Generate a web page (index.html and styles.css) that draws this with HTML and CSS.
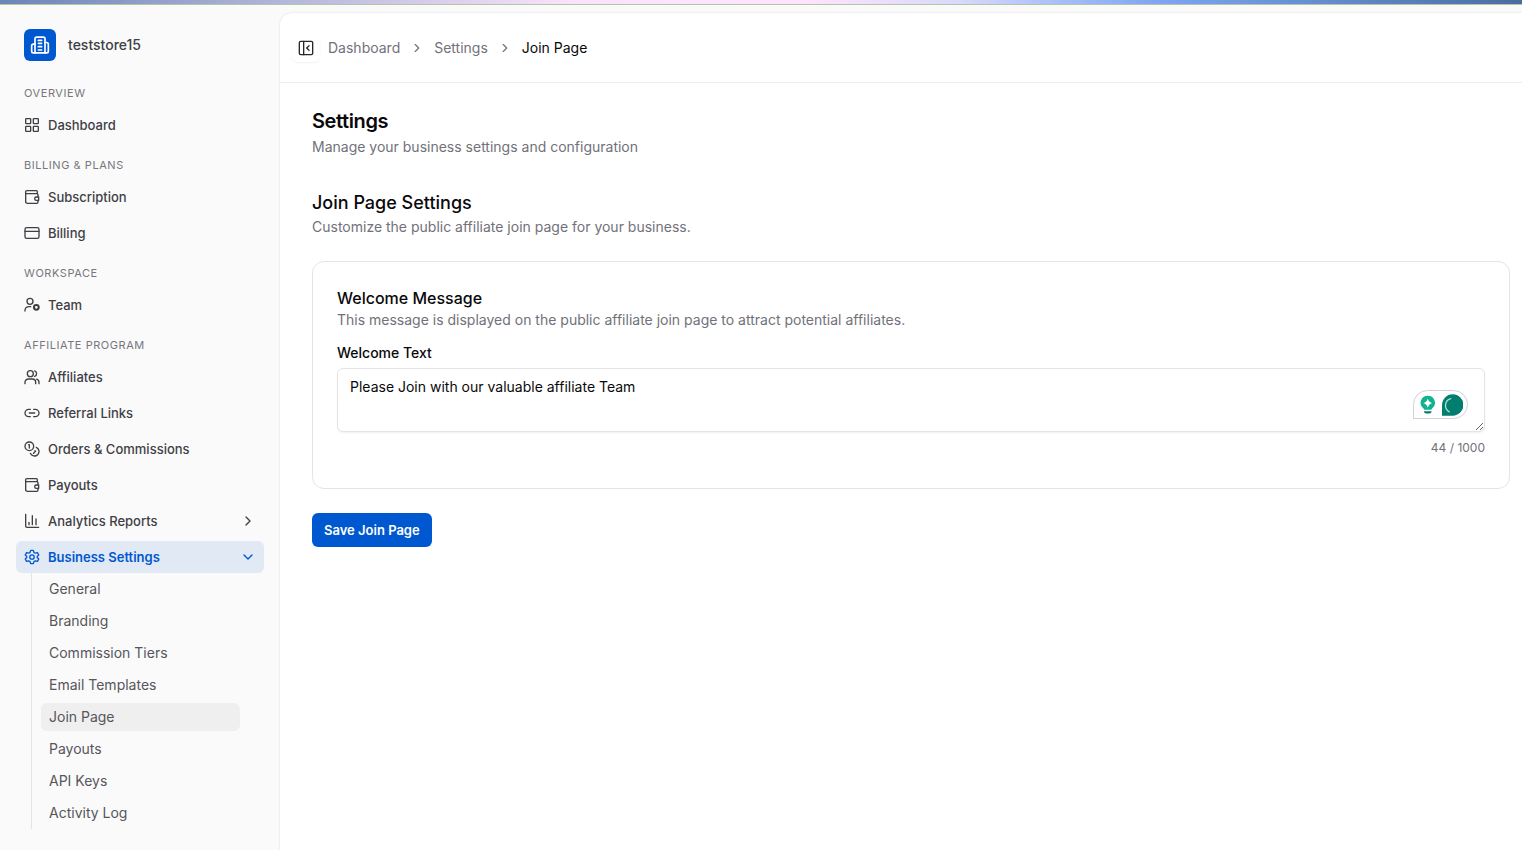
FILE: index.html
```
<!DOCTYPE html>
<html lang="en">
<head>
<meta charset="utf-8">
<meta name="viewport" content="width=device-width, initial-scale=1">
<title>Join Page Settings</title>
<link rel="stylesheet" href="styles.css">
</head>
<body>
<div class="top-strip"></div>
<div class="app">
  <aside class="sidebar">
    <a class="store" href="#">
      <span class="store-logo">
        <svg class="icon icon-lg" viewBox="0 0 24 24"><path d="M6 21.5V4.500a2 2 0 0 1 2-2h8a2 2 0 0 1 2 2v17"/><path d="M6 11H4a2 2 0 0 0-2 2v6.500a2 2 0 0 0 2 2h16a2 2 0 0 0 2-2V11a2 2 0 0 0-2-2h-2"/><path d="M10 6.500h4M10 10h4M10 14h4M10 18h4"/></svg>
      </span>
      <span>teststore15</span>
    </a>
    <nav class="nav">
      <section class="group">
        <h2 class="group-label">OVERVIEW</h2>
        <a class="item" href="#"><svg class="icon" viewBox="0 0 24 24"><rect x="2.500" y="2.500" width="7.500" height="7.500" rx="1"/><rect x="14" y="2.500" width="7.500" height="7.500" rx="1"/><rect x="14" y="14" width="7.500" height="7.500" rx="1"/><rect x="2.500" y="14" width="7.500" height="7.500" rx="1"/></svg><span>Dashboard</span></a>
      </section>
      <section class="group">
        <h2 class="group-label">BILLING &amp; PLANS</h2>
        <a class="item" href="#"><svg class="icon" viewBox="0 0 24 24"><path d="M20 7V4a1.500 1.500 0 0 0-1.500-1.500H4.500a2.250 2.250 0 0 0 0 4.500H19a2 2 0 0 1 2 2v3M2.500 5v14a2.500 2.500 0 0 0 2.500 2.500h14a2 2 0 0 0 2-2V17"/><path d="M22 12h-3.500a2.500 2.500 0 0 0 0 5H22z"/></svg><span>Subscription</span></a>
        <a class="item" href="#"><svg class="icon" viewBox="0 0 24 24"><rect x="1.500" y="4" width="21" height="16" rx="2.500"/><path d="M1.500 9.500h21"/></svg><span>Billing</span></a>
      </section>
      <section class="group">
        <h2 class="group-label">WORKSPACE</h2>
        <a class="item" href="#"><svg class="icon" viewBox="0 0 24 24"><circle cx="9" cy="6.500" r="4.500"/><path d="M1.500 21v-1.500A6 6 0 0 1 7.500 14.500H10"/><circle class="thick" cx="18.500" cy="15.500" r="3.600"/></svg><span>Team</span></a>
      </section>
      <section class="group">
        <h2 class="group-label">AFFILIATE PROGRAM</h2>
        <a class="item" href="#"><svg class="icon" viewBox="0 0 24 24"><circle cx="9.500" cy="7" r="4.500"/><path d="M1.500 22v-2a5 5 0 0 1 5-5h6a5 5 0 0 1 5 5v2M16 2.800a4.500 4.500 0 0 1 0 8.400M19 15.200a5 5 0 0 1 3.500 4.800v2"/></svg><span>Affiliates</span></a>
        <a class="item" href="#"><svg class="icon" viewBox="0 0 24 24"><path d="M9.500 17.500H7a5.500 5.500 0 0 1 0-11h2.500M14.500 6.500H17a5.500 5.500 0 0 1 0 11h-2.500M8 12h8"/></svg><span>Referral Links</span></a>
        <a class="item" href="#"><svg class="icon" viewBox="0 0 24 24"><circle cx="8" cy="8" r="6.500"/><path d="M7 5.500h1v5M18.500 9.500a6.800 6.800 0 1 1-9 9M16.500 14.500l.8.800-3 3"/></svg><span>Orders &amp; Commissions</span></a>
        <a class="item" href="#"><svg class="icon" viewBox="0 0 24 24"><path d="M20 7V4a1.500 1.500 0 0 0-1.500-1.500H4.500a2.250 2.250 0 0 0 0 4.500H19a2 2 0 0 1 2 2v3M2.500 5v14a2.500 2.500 0 0 0 2.500 2.500h14a2 2 0 0 0 2-2V17"/><path d="M22 12h-3.500a2.500 2.500 0 0 0 0 5H22z"/></svg><span>Payouts</span></a>
        <a class="item" href="#"><svg class="icon" viewBox="0 0 24 24"><path d="M2.500 2v17.500a2 2 0 0 0 2 2H22M7.500 17.500V14M12.500 17.500V4M18 17.500V9"/></svg><span>Analytics Reports</span><svg class="icon chevron" viewBox="0 0 24 24"><path d="m9 18 6-6-6-6"/></svg></a>
        <div>
          <a class="item item-active" href="#"><svg class="icon" viewBox="0 0 24 24"><path d="M10 2h4l1 3.200 1.800 1 3.300-.8 2 3.500-2.300 2.400v1.400l2.300 2.400-2 3.500-3.300-.8-1.800 1L14 22h-4l-1-3.200-1.800-1-3.300.8-2-3.500 2.300-2.400v-1.400L1.900 8.900l2-3.500 3.300.8 1.800-1z"/><circle cx="12" cy="12" r="3.300"/></svg><span>Business Settings</span><svg class="icon chevron" viewBox="0 0 24 24"><path d="m6 9 6 6 6-6"/></svg></a>
          <div class="subnav">
            <a class="subitem" href="#">General</a>
            <a class="subitem" href="#">Branding</a>
            <a class="subitem" href="#">Commission Tiers</a>
            <a class="subitem" href="#">Email Templates</a>
            <a class="subitem subitem-active" href="#" aria-current="page">Join Page</a>
            <a class="subitem" href="#">Payouts</a>
            <a class="subitem" href="#">API Keys</a>
            <a class="subitem" href="#">Activity Log</a>
          </div>
        </div>
      </section>
    </nav>
  </aside>
  <main class="panel">
    <header class="bar">
      <button class="toggle" type="button" aria-label="Collapse sidebar"><svg class="icon" viewBox="0 0 24 24"><rect x="2" y="2" width="20" height="20" rx="2"/><path d="M8.500 2v20M16.500 8.500 13 12l3.500 3.500"/></svg></button>
      <nav class="crumbs" aria-label="Breadcrumb">
        <a href="#">Dashboard</a>
        <svg class="icon icon-sm" viewBox="0 0 24 24"><path d="m9 18 6-6-6-6"/></svg>
        <a href="#">Settings</a>
        <svg class="icon icon-sm" viewBox="0 0 24 24"><path d="m9 18 6-6-6-6"/></svg>
        <span class="crumb-current">Join Page</span>
      </nav>
    </header>
    <div class="content">
      <div class="heading">
        <h1>Settings</h1>
        <p>Manage your business settings and configuration</p>
      </div>
      <div class="subheading">
        <h2>Join Page Settings</h2>
        <p>Customize the public affiliate join page for your business.</p>
      </div>
      <form class="form">
        <section class="card">
          <h3>Welcome Message</h3>
          <p>This message is displayed on the public affiliate join page to attract potential affiliates.</p>
          <label for="welcome">Welcome Text</label>
          <div class="field">
            <textarea id="welcome" maxlength="1000" spellcheck="false">Please Join with our valuable affiliate Team</textarea>
            <div class="assistant">
              <svg class="assistant-bulb" viewBox="0 0 16 20"><path fill="#0eb390" d="M8 .5a7.300 7.300 0 0 0-4.200 13.300l.5 1.200h7.400l.5-1.200A7.300 7.300 0 0 0 8 .5z"/><path fill="#fff" d="M8 3.300Q9 7 12.500 8 9 9 8 12.700 7 9 3.500 8 7 7 8 3.300z"/><path fill="#087a68" d="M4 16.300h8a2.500 2.500 0 0 1-2.500 2.400h-3A2.500 2.500 0 0 1 4 16.300z"/></svg>
              <svg class="assistant-mark" viewBox="0 0 22 22"><path fill="#027e6f" d="M0 22V11a11 11 0 1 1 11 11z"/><path fill="none" stroke="#b5dcd6" stroke-width="1.300" stroke-linecap="round" d="M9 4.500A7.300 7.300 0 0 0 7.500 18"/></svg>
            </div>
          </div>
          <div class="counter">44 / 1000</div>
        </section>
        <button class="save" type="button">Save Join Page</button>
      </form>
    </div>
  </main>
</div>
</body>
</html>
```
FILE: styles.css
```
* {
  box-sizing: border-box;
}

body {
  display: flex;
  flex-direction: column;
  min-height: 100vh;
  margin: 0;
  background: #fafafa;
  color: #09090b;
  font: 14px/20px Inter, "Liberation Sans", sans-serif;
}

h1, h2, h3, p {
  margin: 0;
}

a {
  color: inherit;
  text-decoration: none;
}

.top-strip {
  height: 5px;
  border-bottom: 1px solid #b4c7a4;
  background: linear-gradient(90deg, #6b85b7 0%, #b1b4da 18%, #fbe4fa 38%, #fde4fb 53%, #d9d9fb 63%, #a5bcfa 70%, #7fa5f3 76%, #6b93d9 84%, #4a6da0 100%);
}

.app {
  display: flex;
  flex: 1;
}

.icon {
  flex: none;
  width: 16px;
  height: 16px;
  fill: none;
  stroke: currentColor;
  stroke-width: 2;
  stroke-linecap: round;
  stroke-linejoin: round;
}

.icon .thick {
  stroke-width: 3;
}

.icon-lg {
  width: 20px;
  height: 20px;
}

.icon-sm {
  width: 14px;
  height: 14px;
}

.sidebar {
  flex: none;
  width: 280px;
  padding: 16px;
  color: #3f3f46;
}

.store {
  display: flex;
  align-items: center;
  gap: 12px;
  height: 48px;
  padding: 8px;
  font-weight: 500;
}

.store-logo {
  display: grid;
  place-items: center;
  width: 32px;
  height: 32px;
  border-radius: 6px;
  background: #0058d0;
  color: #fff;
}

.nav {
  display: flex;
  flex-direction: column;
  gap: 8px;
  padding-top: 8px;
}

.group {
  display: flex;
  flex-direction: column;
  gap: 4px;
}

.group-label {
  height: 28px;
  padding: 0 8px;
  color: #77777d;
  font-size: 11px;
  font-weight: 400;
  line-height: 32px;
  letter-spacing: 0.05em;
}

.item {
  display: flex;
  align-items: center;
  gap: 8px;
  height: 32px;
  padding: 0 8px;
  border-radius: 6px;
  font-size: 13px;
  font-weight: 500;
}

.item-active {
  background: #e1e9f5;
  color: #0058d0;
  font-weight: 600;
}

.chevron {
  margin-left: auto;
}

.subnav {
  display: flex;
  flex-direction: column;
  gap: 4px;
  margin: 0 24px 0 15px;
  padding: 2px 0 2px 9px;
  border-left: 1px solid #e4e4e7;
}

.subitem {
  padding: 4px 8px;
  border-radius: 6px;
  color: #56565c;
}

.subitem-active {
  background: #efefef;
}

.panel {
  flex: 1;
  min-width: 0;
  margin-top: 8px;
  border-radius: 12px 0 0 0;
  background: #fff;
  box-shadow: 0 0 2px rgba(0, 0, 0, 0.15);
}

.bar {
  display: flex;
  align-items: center;
  gap: 8px;
  height: 70px;
  padding: 0 12px;
  border-bottom: 1px solid #ececee;
}

.toggle {
  display: grid;
  place-items: center;
  width: 28px;
  height: 28px;
  padding: 0;
  border: 0;
  border-radius: 6px;
  background: #fff;
  color: #27272a;
  box-shadow: 0 1px 2px rgba(0, 0, 0, 0.06);
}

.crumbs {
  display: flex;
  align-items: center;
  gap: 10px;
  color: #71717a;
}

.crumb-current {
  color: #09090b;
}

.content {
  padding: 24px 12px 24px 32px;
}

.content p {
  color: #71717a;
}

.heading h1 {
  font-size: 20px;
  font-weight: 600;
  line-height: 28px;
  letter-spacing: -0.02em;
}

.heading p {
  padding-top: 2px;
}

.subheading {
  padding-top: 32px;
}

.subheading h2 {
  font-size: 18px;
  font-weight: 500;
  line-height: 28px;
}

.form {
  display: flex;
  flex-direction: column;
  align-items: flex-start;
  gap: 24px;
  padding-top: 24px;
}

.card {
  align-self: stretch;
  padding: 24px 24px 32px;
  border: 1px solid #e4e4e7;
  border-radius: 12px;
}

.card h3 {
  font-size: 16px;
  font-weight: 500;
  line-height: 24px;
}

.card label {
  display: block;
  padding: 13px 0 5px;
  font-weight: 500;
}

.field {
  position: relative;
}

.field textarea {
  display: block;
  width: 100%;
  height: 64px;
  padding: 8px 12px;
  border: 1px solid #e4e4e7;
  border-radius: 6px;
  outline: 0;
  background: #fff;
  color: #09090b;
  font: inherit;
  box-shadow: 0 1px 2px rgba(0, 0, 0, 0.06);
  resize: vertical;
}

.assistant {
  position: absolute;
  right: 17px;
  bottom: 13px;
  display: flex;
  align-items: center;
  gap: 6px;
  width: 55px;
  height: 29px;
  padding: 0 4px 0 6px;
  border: 1px solid #cfd1dd;
  border-radius: 15px 15px 15px 0;
  background: #fff;
}

.assistant-bulb {
  width: 16px;
  height: 20px;
}

.assistant-mark {
  width: 22px;
  height: 22px;
}

.counter {
  padding-top: 8px;
  color: #71717a;
  font-size: 12px;
  line-height: 16px;
  text-align: right;
}

.save {
  height: 34px;
  padding: 0 12px;
  border: 0;
  border-radius: 6px;
  background: #0058d0;
  color: #fff;
  font: 600 13px/20px Inter, "Liberation Sans", sans-serif;
}
```
